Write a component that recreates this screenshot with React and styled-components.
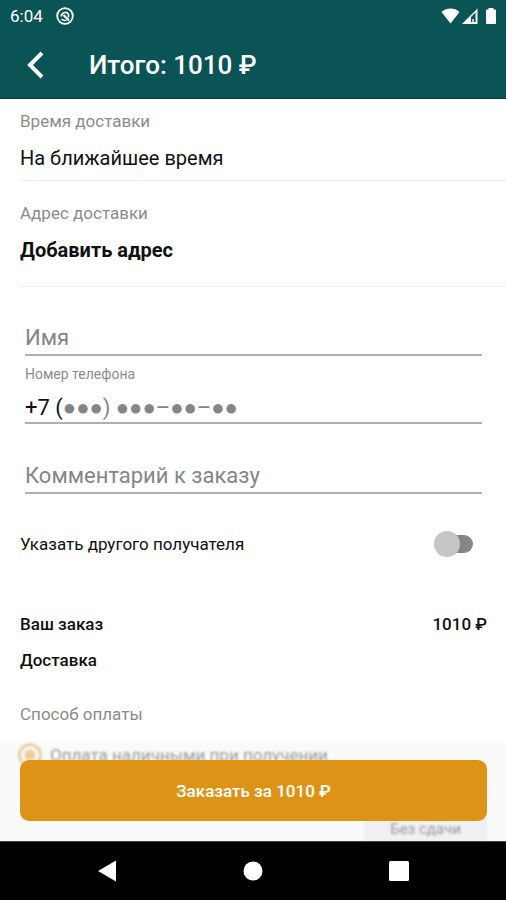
import { useState } from "react"

import styled, { createGlobalStyle } from "styled-components"

const GlobalStyle = createGlobalStyle`
  * {
    box-sizing: border-box;
  }
  body {
    margin: 0;
    background: #fff;
    color: #111;
    font-family: Roboto, "Liberation Sans", "Noto Sans", sans-serif;
  }
  button, input {
    font-family: inherit;
  }
`
const Screen = styled.div`
  display: flex;
  flex-direction: column;
  height: 100vh;
`
const Header = styled.header`
  background: #0b5456;
  color: #fff;
  border-bottom: 1px solid #06393b;
`
const StatusBar = styled.div`
  display: flex;
  align-items: center;
  justify-content: space-between;
  height: 32px;
  padding: 0 6px 0 10px;
`
const StatusGroup = styled.div`
  display: flex;
  align-items: center;
  gap: ${(props) => props.$gap};
  font-size: 17px;
`
const AppBar = styled.div`
  display: flex;
  align-items: center;
  gap: 40px;
  height: 66px;
  padding: 0 20px;
`
const BackButton = styled.button`
  display: flex;
  padding: 0;
  border: 0;
  background: none;
  color: inherit;
  cursor: pointer;
`
const Title = styled.h1`
  margin: 0;
  font-size: 26px;
  font-weight: 500;
`
const Body = styled.div`
  position: relative;
  flex: 1;
  min-height: 0;
`
const Content = styled.main`
  height: 100%;
  overflow-y: auto;
  scrollbar-width: none;
`
const Section = styled.section`
  display: flex;
  flex-direction: column;
  align-items: flex-start;
  gap: 15px;
  margin-left: 20px;
  padding: ${(props) => props.$padding};
  border-bottom: 1px solid #eeeff1;
`
const Caption = styled.h2`
  margin: 0;
  color: #8b8b8b;
  font-size: 17px;
  font-weight: 400;
  line-height: 20px;
`
const Value = styled.p`
  margin: 0;
  font-size: 20px;
  line-height: 24px;
`
const AddressButton = styled.button`
  padding: 0;
  border: 0;
  background: none;
  color: #111;
  font-size: 20px;
  font-weight: 700;
  line-height: 24px;
  cursor: pointer;
`
const Fields = styled.div`
  display: flex;
  flex-direction: column;
  padding: 33px 24px 0 25px;
`
const Field = styled.label`
  display: flex;
  flex-direction: column;
  margin-bottom: ${(props) => props.$space || "0"};
`
const FieldLabel = styled.span`
  padding: 8px 0;
  color: #8b8b8b;
  font-size: 14px;
  line-height: 20px;
`
const FieldRow = styled.span`
  display: flex;
  align-items: center;
  height: ${(props) => props.$height};
  border-bottom: 2px solid #b0b0b0;
  font-size: 22px;
`
const Input = styled.input`
  flex: 1;
  min-width: 0;
  padding: 0;
  border: 0;
  outline: 0;
  background: none;
  color: #111;
  font-size: 22px;
  &::placeholder {
    color: #858585;
    opacity: 1;
  }
`
const Row = styled.div`
  display: flex;
  align-items: center;
  justify-content: space-between;
  height: ${(props) => props.$height};
  padding: 0 19px 0 20px;
  font-size: 17px;
  font-weight: ${(props) => props.$weight || 400};
`
const Summary = styled.section`
  padding-top: 12px;
`
const Switch = styled.input`
  appearance: none;
  display: flex;
  align-items: center;
  width: 36px;
  height: 18px;
  margin: 0 14px 0 0;
  border-radius: 9px;
  background: #868686;
  cursor: pointer;
  &::before {
    content: "";
    width: 26px;
    height: 26px;
    margin-left: -3px;
    border-radius: 50%;
    background: #c6c6c6;
  }
  &:checked::before {
    margin-left: 14px;
    background: #dd9416;
  }
`
const Payment = styled.section`
  padding: 26px 0 20px;
`
const PaymentTitle = styled(Caption)`
  padding-left: 20px;
`
const PaymentOption = styled.label`
  display: flex;
  align-items: center;
  gap: 8px;
  padding: 19px 18px 0;
  font-size: 17px;
`
const Radio = styled.input`
  appearance: none;
  width: 24px;
  height: 24px;
  margin: 0;
  border: 3px solid #dd9416;
  border-radius: 50%;
  &:checked {
    background: radial-gradient(#dd9416 5px, transparent 6px);
  }
`
const ChangeButton = styled.button`
  display: block;
  width: 123px;
  height: 40px;
  margin: 42px 19px 0 auto;
  border: 0;
  background: #e6e6ee;
  color: #111;
  font-size: 15px;
`
const OrderBar = styled.div`
  position: absolute;
  right: 0;
  bottom: 0;
  left: 0;
  padding: 19px 19px 20px 20px;
  background: rgba(246, 246, 246, 0.6);
  backdrop-filter: blur(1px);
`
const OrderButton = styled.button`
  width: 100%;
  height: 61px;
  border: 0;
  border-radius: 9px;
  background: #dd9416;
  color: #fff;
  font-size: 17px;
  font-weight: 500;
  cursor: pointer;
`
const NavBar = styled.nav`
  display: flex;
  align-items: center;
  justify-content: center;
  gap: 126px;
  height: 59px;
  border-top: 1px solid #444;
  background: #000;
`
const NavButton = styled.button`
  display: flex;
  padding: 0;
  border: 0;
  background: none;
  cursor: pointer;
`

const App = () => {
  const [name, setName] = useState("")
  const [phone, setPhone] = useState("")
  const [comment, setComment] = useState("")
  const [otherPerson, setOtherPerson] = useState(false)

  return (
    <>
      <GlobalStyle />
      <Screen>
        <Header>
          <StatusBar>
            <StatusGroup $gap="13px">
              <span>6:04</span>
              <svg width="18" height="18" viewBox="0 0 18 18" fill="none" stroke="#fff">
                <circle cx="9" cy="9" r="7.8" strokeWidth="1.8" />
                <path d="M5.200 9.500A4 4 0 0 1 12.500 7.200V10.500" strokeWidth="1.600" />
                <path d="M5.500 12A5 5 0 0 0 10.500 13.200" strokeWidth="1.400" />
                <path d="M7.500 8L13 13.500" strokeWidth="2.200" />
              </svg>
            </StatusGroup>
            <StatusGroup $gap="2px">
              <svg width="19" height="16" viewBox="0 0 19 16" fill="#fff">
                <path d="M0.500 4C5.500-0.600 13.500-0.600 18.500 4L9.500 15.500Z" />
              </svg>
              <svg width="16" height="16" viewBox="0 0 16 16">
                <path d="M0 16L15.500 0.500V16Z" fill="#fff" />
                <path d="M9 14V9L13.500 4.500V14Z" fill="#0b5456" />
                <path d="M10 14V11H12V14Z" fill="#b9cfd0" />
              </svg>
              <svg width="20" height="16" viewBox="0 0 20 16" fill="#fff">
                <path d="M8.500 0H13.500V1.500H15Q16 1.500 16 2.500V15Q16 16 15 16H7Q6 16 6 15V2.500Q6 1.500 7 1.500H8.500Z" />
              </svg>
            </StatusGroup>
          </StatusBar>
          <AppBar>
            <BackButton aria-label="Назад">
              <svg width="29" height="28" viewBox="0 0 29 28" fill="none" stroke="#fff" strokeWidth="4">
                <path d="M22 2L10 14L22 26" />
              </svg>
            </BackButton>
            <Title>Итого: 1010 ₽</Title>
          </AppBar>
        </Header>
        <Body>
          <Content>
            <Section $padding="12px 0 10px">
              <Caption>Время доставки</Caption>
              <Value>На ближайшее время</Value>
            </Section>
            <Section $padding="22px 0 24px">
              <Caption>Адрес доставки</Caption>
              <AddressButton>Добавить адрес</AddressButton>
            </Section>
            <Fields>
              <Field>
                <FieldRow $height="36px">
                  <Input
                    aria-label="Имя"
                    placeholder="Имя"
                    value={name}
                    onChange={(e) => setName(e.target.value)}
                  />
                </FieldRow>
              </Field>
              <Field $space="34px">
                <FieldLabel>Номер телефона</FieldLabel>
                <FieldRow $height="32px">
                  <span>+7 (</span>
                  <Input
                    type="tel"
                    placeholder="●●●) ●●●–●●–●●"
                    value={phone}
                    onChange={(e) => setPhone(e.target.value)}
                  />
                </FieldRow>
              </Field>
              <Field>
                <FieldRow $height="36px">
                  <Input
                    aria-label="Комментарий к заказу"
                    placeholder="Комментарий к заказу"
                    value={comment}
                    onChange={(e) => setComment(e.target.value)}
                  />
                </FieldRow>
              </Field>
            </Fields>
            <Row as="label" $height="100px">
              Указать другого получателя
              <Switch
                type="checkbox"
                checked={otherPerson}
                onChange={(e) => setOtherPerson(e.target.checked)}
              />
            </Row>
            <Summary>
              <Row $height="36px" $weight={500}>
                <span>Ваш заказ</span>
                <span>1010 ₽</span>
              </Row>
              <Row $height="36px" $weight={500}>Доставка</Row>
            </Summary>
            <Payment>
              <PaymentTitle>Способ оплаты</PaymentTitle>
              <PaymentOption>
                <Radio type="radio" name="payment" defaultChecked />
                Оплата наличными при получении
              </PaymentOption>
              <ChangeButton>Без сдачи</ChangeButton>
            </Payment>
          </Content>
          <OrderBar>
            <OrderButton>Заказать за 1010 ₽</OrderButton>
          </OrderBar>
        </Body>
        <NavBar>
          <NavButton aria-label="Назад">
            <svg width="20" height="22" viewBox="0 0 20 22" fill="#fff">
              <path d="M1 11L19 0.500V21.500Z" />
            </svg>
          </NavButton>
          <NavButton aria-label="Домой">
            <svg width="20" height="20" viewBox="0 0 20 20" fill="#fff">
              <circle cx="10" cy="10" r="9.500" />
            </svg>
          </NavButton>
          <NavButton aria-label="Недавние">
            <svg width="20" height="20" viewBox="0 0 20 20" fill="#fff">
              <rect width="20" height="20" rx="1.500" />
            </svg>
          </NavButton>
        </NavBar>
      </Screen>
    </>
  )
}

export default App
